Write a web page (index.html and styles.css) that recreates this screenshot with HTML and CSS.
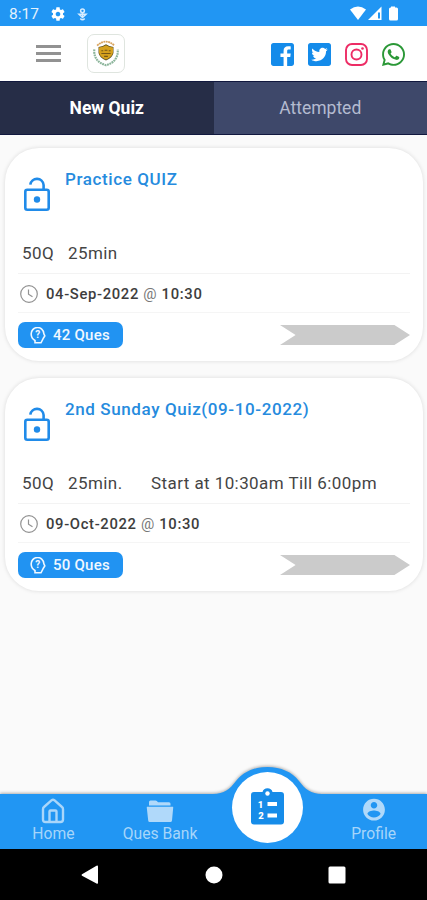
FILE: index.html
```html
<!DOCTYPE html>
<html lang="en">
<head>
<meta charset="utf-8">
<meta name="viewport" content="width=device-width, initial-scale=1">
<title>Quiz</title>
<link rel="stylesheet" href="styles.css">
</head>
<body>
<div class="app">
  <div class="status">
    <span class="status-time">8:17</span>
    <svg class="status-gear" viewBox="0 0 24 24"><path d="M19.43 12.98c.04-.32.07-.64.07-.98s-.03-.66-.07-.98l2.11-1.65c.19-.15.24-.42.12-.64l-2-3.46c-.12-.22-.39-.3-.61-.22l-2.49 1c-.52-.4-1.08-.73-1.69-.98l-.38-2.65C14.46 2.18 14.25 2 14 2h-4c-.25 0-.46.18-.49.42l-.38 2.65c-.61.25-1.17.59-1.69.98l-2.49-1c-.23-.09-.49 0-.61.22l-2 3.46c-.13.22-.07.49.12.64l2.11 1.65c-.04.32-.07.65-.07.98s.03.66.07.98l-2.11 1.65c-.19.15-.24.42-.12.64l2 3.46c.12.22.39.3.61.22l2.49-1c.52.4 1.08.73 1.69.98l.38 2.65c.03.24.24.42.49.42h4c.25 0 .46-.18.49-.42l.38-2.65c.61-.25 1.17-.59 1.69-.98l2.49 1c.23.09.49 0 .61-.22l2-3.46c.12-.22.07-.49-.12-.64l-2.11-1.65zM12 15.5c-1.93 0-3.5-1.57-3.5-3.5s1.57-3.5 3.5-3.5 3.5 1.57 3.5 3.5-1.57 3.5-3.5 3.5z"/></svg>
    <svg class="status-pin" viewBox="0 0 10 13"><circle cx="5" cy="2.8" r="1.9"/><path d="M5 4.500v4.500M1.500 6.200H8.500L5 9.500ZM2.800 10.500q2.200 2.600 4.400 0"/></svg>
    <svg class="status-signals" viewBox="0 0 50 16"><path d="M0 3.500Q8 -2.500 16 3.500L8 14Z"/><path d="M31.500 .5V14H18Z"/><path class="signal-gap" d="M28 6.500h2v6h-2z"/><path d="M41 1.500V.5h4v1h1.500a1.500 1.500 0 0 1 1.500 1.500v10a1.500 1.500 0 0 1-1.500 1.500h-6a1.500 1.500 0 0 1-1.500-1.500V3a1.500 1.500 0 0 1 1.500-1.500Z"/></svg>
  </div>
  <header class="header">
    <div class="menu"><span></span><span></span><span></span></div>
    <div class="logo">
      <svg viewBox="0 0 30 30">
        <path class="logo-arc" d="M5.500 6Q15-2.500 24 6"/>
        <path class="logo-laurel" d="M2.500 10C1.500 19 7 25 15 27C23 25 28.500 19 27.500 10"/>
        <path class="logo-rim" d="M7 7.500Q12 7 15 4.500Q18 7 23 7.500V14Q22 19 15 22Q8 19 7 14Z"/>
        <path class="logo-shield" d="M7.500 8Q12 7.500 15 5.500Q18 7.500 22.500 8V13.500Q21.500 18.500 15 21Q8.500 18.500 7.500 13.500Z"/>
        <path class="logo-mark" d="M10 11.500h2M13.500 11h3M18 11.500h2M10 14.500h10M13 17.500h4"/>
      </svg>
    </div>
    <div class="social">
      <svg class="blue" viewBox="0 32 448 448"><path d="M448 80v352c0 26.500-21.500 48-48 48h-85.300V302.800h60.600l8.700-67.600h-69.300V192c0-19.600 5.400-32.900 33.500-32.900H384V98.700c-6.200-.8-27.400-2.700-52.200-2.700-51.600 0-87 31.500-87 89.400v49.900H184v67.600h60.900V480H48c-26.500 0-48-21.500-48-48V80c0-26.500 21.500-48 48-48h352c26.500 0 48 21.500 48 48z"/></svg>
      <svg class="blue" viewBox="0 32 448 448"><path d="M400 32H48C21.500 32 0 53.500 0 80v352c0 26.500 21.500 48 48 48h352c26.500 0 48-21.500 48-48V80c0-26.500-21.500-48-48-48zm-48.900 158.800c.2 2.800.2 5.700.2 8.500 0 86.700-66 186.600-186.600 186.600-37.200 0-71.700-10.800-100.700-29.400 5.300.6 10.400.8 15.800.8 30.700 0 58.900-10.400 81.400-28-28.800-.6-53-19.500-61.300-45.500 10.100 1.500 19.200 1.500 29.600-1.200-30-6.100-52.500-32.500-52.500-64.400v-.8c8.700 4.900 18.900 7.900 29.600 8.300a65.447 65.447 0 0 1-29.200-54.600c0-12.200 3.200-23.400 8.900-33.100 32.300 39.800 80.800 65.800 135.200 68.600-9.300-44.500 24-80.600 64-80.600 18.900 0 35.900 7.900 47.900 20.700 14.800-2.800 29-8.300 41.600-15.800-4.900 15.200-15.200 28-28.800 36.100 13.200-1.400 26-5.100 37.800-10.200-8.900 13.100-20.100 24.700-32.900 34z"/></svg>
      <svg class="pink" viewBox="0 0 23 23"><rect x="1" y="1" width="21" height="21" rx="6"/><circle cx="11.500" cy="11.500" r="5"/><circle class="dot" cx="17.500" cy="5.500" r="1.300"/></svg>
      <svg class="green" viewBox="0 32 448 448"><path d="M380.900 97.100C339 55.100 283.200 32 223.900 32c-122.400 0-222 99.600-222 222 0 39.100 10.200 77.300 29.600 111L0 480l117.700-30.900c32.400 17.700 68.900 27 106.100 27h.1c122.300 0 224.100-99.600 224.100-222 0-59.300-25.200-115-67.100-157zm-157 341.600c-33.200 0-65.700-8.900-94-25.700l-6.700-4-69.800 18.300L72 359.200l-4.400-7c-18.500-29.400-28.200-63.300-28.200-98.200 0-101.700 82.800-184.500 184.600-184.500 49.300 0 95.600 19.200 130.400 54.100 34.800 34.900 56.200 81.200 56.100 130.500 0 101.800-84.900 184.600-186.600 184.600zm101.200-138.200c-5.500-2.800-32.800-16.200-37.900-18-5.100-1.900-8.800-2.800-12.500 2.800-3.700 5.600-14.300 18-17.600 21.800-3.200 3.700-6.500 4.200-12 1.400-32.600-16.300-54-29.100-75.500-66-5.700-9.800 5.700-9.100 16.300-30.300 1.800-3.700.9-6.900-.5-9.700-1.400-2.800-12.500-30.100-17.100-41.200-4.500-10.800-9.100-9.300-12.500-9.500-3.200-.2-6.900-.2-10.600-.2-3.700 0-9.700 1.400-14.800 6.900-5.100 5.600-19.400 19-19.400 46.300 0 27.300 19.900 53.700 22.600 57.400 2.800 3.700 39.100 59.700 94.800 83.800 35.200 15.200 49 16.500 66.600 13.900 10.700-1.600 32.800-13.400 37.400-26.400 4.600-13 4.600-24.100 3.200-27.600-1.300-3.500-5-4.900-10.500-7.600z"/></svg>
    </div>
  </header>
  <div class="tabs">
    <div class="tab active">New Quiz</div>
    <div class="tab">Attempted</div>
  </div>
  <main class="list">
    <article class="card">
      <div class="card-head">
        <svg class="lock" viewBox="0 0 26 34"><rect x="1.300" y="12.800" width="23.400" height="19.900" rx="2"/><path d="M6.300 7.600A6.700 6.700 0 0 1 19.600 8V12.500"/><circle cx="13" cy="22.500" r="3.200"/></svg>
        <h2 class="title">Practice QUIZ</h2>
      </div>
      <div class="meta"><span class="count">50Q</span><span class="mins">25min</span></div>
      <div class="date">
        <svg class="clock" viewBox="0 0 18 18"><circle cx="9" cy="9" r="8.300"/><path d="M8.500 4.500V9.200l4 2.600"/></svg>
        <span class="date-text">04-Sep-2022 <i>@</i> 10:30</span>
      </div>
      <div class="card-foot">
        <div class="badge">
          <svg class="head" viewBox="0 0 16 17"><path d="M5 15.800V13.500C2.500 12 1.200 9.800 1.200 7.200A6.300 6.300 0 0 1 13.800 6.500L14.800 9 13.500 11 11 15.800Z"/><text x="7.800" y="10.500">?</text></svg>
          <span>42 Ques</span>
        </div>
        <div class="arrow"></div>
      </div>
    </article>
    <article class="card">
      <div class="card-head">
        <svg class="lock" viewBox="0 0 26 34"><rect x="1.300" y="12.800" width="23.400" height="19.900" rx="2"/><path d="M6.300 7.600A6.700 6.700 0 0 1 19.600 8V12.500"/><circle cx="13" cy="22.500" r="3.200"/></svg>
        <h2 class="title">2nd Sunday Quiz(09-10-2022)</h2>
      </div>
      <div class="meta"><span class="count">50Q</span><span class="mins">25min.</span><span class="window">Start at 10:30am Till 6:00pm</span></div>
      <div class="date">
        <svg class="clock" viewBox="0 0 18 18"><circle cx="9" cy="9" r="8.300"/><path d="M8.500 4.500V9.200l4 2.600"/></svg>
        <span class="date-text">09-Oct-2022 <i>@</i> 10:30</span>
      </div>
      <div class="card-foot">
        <div class="badge">
          <svg class="head" viewBox="0 0 16 17"><path d="M5 15.800V13.500C2.500 12 1.200 9.800 1.200 7.200A6.300 6.300 0 0 1 13.800 6.500L14.800 9 13.500 11 11 15.800Z"/><text x="7.800" y="10.500">?</text></svg>
          <span>50 Ques</span>
        </div>
        <div class="arrow"></div>
      </div>
    </article>
  </main>
  <nav class="nav">
    <svg class="nav-shape" viewBox="0 0 427 83"><path d="M0 28H213C224 28 230 23 236 15C243 6 254 1 267.500 1C281 1 292 6 299 15C305 23 311 28 322 28H427V83H0Z"/></svg>
    <div class="nav-item">
      <svg class="nav-icon" viewBox="0 0 24 26"><path class="line" d="M2 11.200Q2 9.800 3 9L10.700 2.200Q12 1.200 13.300 2.200L21 9Q22 9.800 22 11.200V21.500Q22 24 19.500 24H4.500Q2 24 2 21.500ZM8.500 24V13.500Q8.500 12.500 9.500 12.500H14.500Q15.500 12.500 15.500 13.500V24"/></svg>
      <span>Home</span>
    </div>
    <div class="nav-item">
      <svg class="nav-icon wide" viewBox="0 0 28 26"><path d="M3 7.500V4Q3 2.500 4.500 2.500H9.500Q11 2.500 12 4.200H23Q24.500 4.200 24.500 5.700V7.500Z"/><path d="M1 8.700H27Q27.300 8.700 27.200 9.700L26 22.500Q25.800 24 24.300 24H3.800Q2.300 24 2.200 22.500L.8 9.700Q.7 8.700 1 8.700Z"/></svg>
      <span>Ques Bank</span>
    </div>
    <div class="nav-item">
      <div class="fab">
        <svg viewBox="0 0 33 37"><path d="M3 4H11.500A5.200 5.200 0 0 1 21.500 4H30A3 3 0 0 1 33 7V33.500A3 3 0 0 1 30 36.500H3A3 3 0 0 1 0 33.500V7A3 3 0 0 1 3 4Z"/><circle class="hole" cx="16.500" cy="5.500" r="2.200"/><path class="hole" d="M16.500 14H26V18H16.500ZM16.500 25.500H26V29.500H16.500Z"/><text x="9.500" y="20">1</text><text x="10" y="31.300">2</text></svg>
      </div>
    </div>
    <div class="nav-item">
      <svg class="nav-icon" viewBox="1 1.500 22 23.500"><path d="M12 2C6.480 2 2 6.480 2 12s4.480 10 10 10 10-4.480 10-10S17.520 2 12 2zm0 3c1.660 0 3 1.340 3 3s-1.340 3-3 3-3-1.340-3-3 1.340-3 3-3zm0 14.200c-2.500 0-4.710-1.280-6-3.220.03-1.990 4-3.080 6-3.080 1.990 0 5.970 1.090 6 3.080-1.290 1.940-3.500 3.220-6 3.220z"/></svg>
      <span>Profile</span>
    </div>
  </nav>
  <div class="system">
    <svg viewBox="0 0 18 20"><path d="M1 9.200 15.500.8Q17 0 17 1.700V17.700Q17 19.300 15.500 18.500L1 10.800Q0 10 1 9.200Z"/></svg>
    <svg viewBox="0 0 18 20"><circle cx="9" cy="10" r="8.500"/></svg>
    <svg viewBox="0 0 18 20"><rect x=".5" y="1.500" width="17" height="17" rx="1.500"/></svg>
  </div>
</div>
</body>
</html>
```
FILE: styles.css
```css
* { box-sizing: border-box; }

body {
  margin: 0;
  font-family: Roboto, "Liberation Sans", sans-serif;
  background: #fafafa;
}

svg { display: block; flex: none; }

.app {
  width: 427px;
  height: 900px;
  display: flex;
  flex-direction: column;
  overflow: hidden;
}

.status {
  height: 26px;
  background: #2196f3;
  display: flex;
  align-items: center;
  padding: 2px 27px 0 9px;
  color: #e3f2fd;
}
.status-time { font-size: 15.500px; width: 41px; }
.status-gear { width: 16px; height: 16px; fill: #fff; }
.status-pin { width: 11px; height: 13px; margin-left: 11px; fill: none; stroke: #d6ecff; stroke-width: 1.500; }
.status-signals { width: 50px; height: 16px; margin-left: auto; fill: #fff; }
.status-signals .signal-gap { fill: #2196f3; }

.header {
  height: 55px;
  background: #fff;
  display: flex;
  align-items: center;
  padding: 0 22.500px 0 36px;
}
.menu { width: 25px; display: flex; flex-direction: column; gap: 4px; }
.menu span { height: 3px; background: #929292; }
.logo {
  width: 38px;
  height: 39px;
  margin-left: 26px;
  border: 1px solid #dfe5df;
  border-radius: 7px;
  display: flex;
  align-items: center;
  justify-content: center;
}
.logo svg { width: 28px; height: 28px; fill: none; }
.logo-arc { stroke: #d9a45f; stroke-width: 2; stroke-dasharray: 2 .6; }
.logo-laurel { stroke: #8cb59b; stroke-width: 2.300; stroke-dasharray: 2 .7; }
.logo-rim { fill: #594e20; }
.logo-shield { fill: #d5a11d; }
.logo-mark { stroke: #765716; stroke-width: 1.200; }

.social { margin: 2px 0 0 auto; display: flex; gap: 14px; }
.social svg { width: 23px; height: 23px; }
.blue { fill: #148bea; }
.green { fill: #2b9837; }
.pink { fill: none; stroke: #ed2c65; stroke-width: 1.900; }
.pink .dot { fill: #ed2c65; stroke: none; }

.tabs {
  height: 54px;
  display: flex;
  border-top: 1px solid #11183e;
  border-bottom: 1px solid #11183e;
}
.tab {
  flex: 1;
  display: flex;
  align-items: center;
  justify-content: center;
  background: #3e486a;
  color: #b4bbd0;
  font-size: 17.500px;
}
.tab.active { background: #262d47; color: #fff; font-weight: 700; }

.list {
  flex: 1;
  display: flex;
  flex-direction: column;
  gap: 17px;
  padding: 13px 4px 0 5px;
}
.card {
  height: 213px;
  border-radius: 34px;
  background: #fff;
  box-shadow: 0 0 4px rgba(0, 0, 0, .13);
  padding: 20px 13px 0;
}
.card-head { height: 73px; display: flex; padding-left: 6px; }
.lock { width: 26px; height: 34px; margin-top: 9px; fill: none; stroke: #208be9; stroke-width: 2.600; }
.lock circle { fill: #208be9; stroke: none; }
.title {
  margin: 0 0 0 15px;
  color: #268bde;
  font-size: 17px;
  line-height: 22px;
  font-weight: 500;
  white-space: nowrap;
  letter-spacing: .6px;
}
.meta {
  height: 33px;
  display: flex;
  padding: 1px 0 0 4px;
  font-size: 17px;
  line-height: 22px;
  color: #444;
  border-bottom: 1px solid #f3f3f3;
  letter-spacing: .42px;
  white-space: nowrap;
}
.count { width: 46px; }
.mins { width: 83px; }
.date {
  height: 39px;
  display: flex;
  align-items: center;
  padding: 1px 0 0 2px;
  border-bottom: 1px solid #f5f5f5;
}
.clock { width: 18px; height: 18px; fill: none; stroke: #929292; stroke-width: 1.200; }
.date-text {
  margin-left: 8px;
  font-size: 14.800px;
  font-weight: 500;
  color: #3d3d3d;
  letter-spacing: .66px;
  white-space: nowrap;
}
.date-text i { font-style: normal; font-weight: 400; color: #777; }
.card-foot { height: 44px; display: flex; align-items: center; justify-content: space-between; }
.badge {
  width: 105px;
  height: 26px;
  border-radius: 7px;
  background: #2193f2;
  color: #f0f8ff;
  display: flex;
  align-items: center;
  padding-left: 12px;
  font-size: 15px;
  font-weight: 500;
  letter-spacing: .25px;
}
.head { width: 16px; height: 17px; margin-right: 7px; fill: none; stroke: #f0f8ff; stroke-width: 1.600; }
.head text { fill: #f0f8ff; stroke: none; font-size: 10px; font-weight: 700; text-anchor: middle; letter-spacing: 0; }
.arrow {
  width: 130px;
  height: 20px;
  background: #cbcbcb;
  clip-path: polygon(0 0, 88% 0, 100% 50%, 88% 100%, 0 100%, 12% 50%);
}

.nav { height: 55px; position: relative; display: flex; }
.nav-shape {
  position: absolute;
  left: 0;
  bottom: 0;
  width: 427px;
  height: 83px;
  overflow: visible;
  fill: #2196f3;
  filter: drop-shadow(0 -1px 1.500px rgba(0, 0, 0, .3));
}
.nav-item {
  flex: 1;
  position: relative;
  display: flex;
  flex-direction: column;
  align-items: center;
  padding-top: 4px;
  color: #a6d5fa;
  font-size: 15.700px;
  line-height: 19px;
}
.nav-icon { width: 24px; height: 26px; fill: #b0d9fa; }
.nav-icon.wide { width: 28px; }
.nav-icon .line { fill: none; stroke: #a9d6fa; stroke-width: 2.400; }
.fab {
  width: 71px;
  height: 71px;
  flex: none;
  margin: -26px 0 0 1px;
  border-radius: 50%;
  background: #fff;
  display: flex;
  align-items: center;
  justify-content: center;
}
.fab svg { width: 33px; height: 37px; fill: #168ce9; margin-bottom: 2px; }
.fab .hole { fill: #fff; }
.fab text { fill: #fff; font-size: 9.500px; font-weight: 900; text-anchor: middle; }

.system {
  height: 51px;
  position: relative;
  background: #000;
  display: flex;
  align-items: center;
  justify-content: space-between;
  padding: 0 81px;
}
.system svg { width: 18px; height: 20px; fill: #fff; }
```
